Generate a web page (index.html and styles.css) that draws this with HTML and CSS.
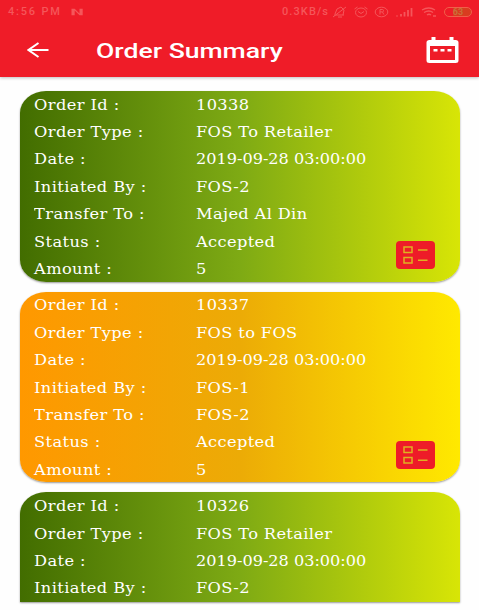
FILE: index.html
```html
<!DOCTYPE html>
<html lang="en">
<head>
    <meta charset="utf-8">
    <meta name="viewport" content="width=device-width, initial-scale=1.0">
    <title>Order Summary</title>
    <link rel="stylesheet" href="styles.css">
</head>
<body>
    <header class="header">
        <div class="status-bar">
            <span class="clock">4:56 PM</span>
            <svg class="nougat" width="15" height="8" viewBox="0 0 17 10"><path d="M1 9V1h4l6 6V1h4v8h-4L5 3v6z" fill="currentColor"/></svg>
            <span class="speed">0.3KB/s</span>
            <svg class="status-icons" width="112" height="14" viewBox="0 0 112 14" fill="none" stroke="currentColor">
                <!-- muted bell -->
                <path d="M2 10h10M3 9l2-5 4-2 3 3-1 5M1 12L14 2M6 12h4"/>
                <!-- alarm -->
                <ellipse cx="29" cy="7.5" rx="5.5" ry="4.5"/><path d="M26 6.5l3 2 3-2M22.500 4l3-2M32.500 2l3 2"/>
                <!-- registered -->
                <ellipse cx="49.500" cy="7" rx="6.300" ry="4.800"/><path d="M48 9.500v-5h2.500q1 0 1 1.200t-1 1.200H48M50.500 7l1.300 2.500"/>
                <!-- signal -->
                <path d="M65 11.500v-1M69 11.500V9M72.500 11.500V7M76 11.500V5M79.500 11.500V3" stroke-width="1.800"/>
                <!-- wifi -->
                <path d="M90 5q7-4 13 0M92 7.500q5-3 9 0M95 10q2-1.500 4 0M101 11h3" stroke-width="1.300"/>
            </svg>
            <span class="battery">63</span>
        </div>
        <div class="toolbar">
            <svg class="back" width="22" height="16" viewBox="0 0 22 16"><path d="M11.500 1L1.500 8l10 7M1.500 8H21.500" fill="none" stroke="#fff" stroke-width="2"/></svg>
            <h1 class="title"><span>Order Summary</span></h1>
            <svg class="calendar" width="33" height="27" viewBox="0 0 33 27">
                <path fill="#fff" fill-rule="evenodd" d="M5.500 0h4v3h14V0h4v3H29.500q3 0 3 2.500v18q0 2.500-3 2.500h-26q-3 0-3-2.500v-18Q.5 3 3.500 3h2zM4 9v14h25V9z"/>
                <path fill="#fff" d="M7.500 12h4v2.500h-4zM14.500 12h4v2.500h-4zM21.500 12h4v2.500h-4z"/>
            </svg>
        </div>
    </header>

    <main class="orders">
        <section class="card green">
            <dl>
                <dt>Order Id :</dt><dd>10338</dd>
                <dt>Order Type :</dt><dd>FOS To Retailer</dd>
                <dt>Date :</dt><dd class="date">2019-09-28 03:00:00</dd>
                <dt>Initiated By :</dt><dd>FOS-2</dd>
                <dt>Transfer To :</dt><dd>Majed Al Din</dd>
                <dt>Status :</dt><dd>Accepted</dd>
                <dt>Amount :</dt><dd>5</dd>
            </dl>
            <svg class="details" width="39" height="28" viewBox="0 0 39 28"><rect width="39" height="28" rx="4" fill="#ee1c28"/><path d="M8 6h8v5.500H8zM8 16.500h8V22H8zM22 9h9.500M22 19.200h9.500" fill="none" stroke="#e0b020" stroke-width="1.500"/></svg>
        </section>

        <section class="card orange">
            <dl>
                <dt>Order Id :</dt><dd>10337</dd>
                <dt>Order Type :</dt><dd>FOS to FOS</dd>
                <dt>Date :</dt><dd class="date">2019-09-28 03:00:00</dd>
                <dt>Initiated By :</dt><dd>FOS-1</dd>
                <dt>Transfer To :</dt><dd>FOS-2</dd>
                <dt>Status :</dt><dd>Accepted</dd>
                <dt>Amount :</dt><dd>5</dd>
            </dl>
            <svg class="details" width="39" height="28" viewBox="0 0 39 28"><rect width="39" height="28" rx="4" fill="#ee1c28"/><path d="M8 6h8v5.500H8zM8 16.500h8V22H8zM22 9h9.500M22 19.200h9.500" fill="none" stroke="#e0b020" stroke-width="1.500"/></svg>
        </section>

        <section class="card green cut">
            <dl>
                <dt>Order Id :</dt><dd>10326</dd>
                <dt>Order Type :</dt><dd>FOS To Retailer</dd>
                <dt>Date :</dt><dd class="date">2019-09-28 03:00:00</dd>
                <dt>Initiated By :</dt><dd>FOS-2</dd>
            </dl>
        </section>
    </main>
</body>
</html>
```

FILE: styles.css
```css
* {
    box-sizing: border-box;
}

body {
    margin: 0;
    height: 610px;
    overflow: hidden;
    background: #fefefe;
    font-family: "DejaVu Serif", serif;
    color: #fff;
}

svg {
    display: block;
    flex-shrink: 0;
}

.header {
    height: 76.500px;
    background: #ef1c28;
    box-shadow: 0 1px 3px rgba(0, 0, 0, 0.25);
}

.status-bar {
    display: flex;
    align-items: center;
    height: 24px;
    padding-left: 8px;
    font: 500 11px/24px Roboto, sans-serif;
    color: #f5565a;
}

.clock {
    width: 62px;
    letter-spacing: 1.800px;
    white-space: nowrap;
}

.speed {
    width: 50px;
    margin-left: 197px;
    letter-spacing: 1.100px;
    white-space: nowrap;
}

.battery {
    width: 28px;
    height: 10px;
    border: 1px solid #f0604a;
    border-radius: 5px;
    font-size: 9px;
    font-weight: 700;
    line-height: 8px;
    text-align: center;
    background: linear-gradient(90deg, transparent 30%, #d93c20 30%);
    color: #c8703a;
}

.toolbar {
    display: flex;
    align-items: center;
    height: 52px;
    padding: 0 20px 0 27px;
}

.title {
    flex: 1;
    margin: 0 0 0 47px;
    font: 500 20px/28px Roboto, sans-serif;
}

/* type is wider than it is tall throughout the screen */
.title span {
    display: inline-block;
    transform: translateY(1px) scaleX(1.328);
    transform-origin: left;
}

.orders {
    padding: 14.500px 19px 0 20px;
}

.card {
    position: relative;
    height: 190.700px;
    margin-bottom: 10px;
    border-radius: 26px / 22px;
    overflow: hidden;
    box-shadow: 0 1px 2px rgba(0, 0, 0, 0.4);
}

.green {
    background: linear-gradient(90deg, #426d00, #7eaa14 50%, #d8e506);
}

.orange {
    background: linear-gradient(90deg, #ff9800, #ecab06 50%, #ffe900);
}

.cut {
    height: 109.500px;
    border-radius: 26px 26px 0 0 / 22px 22px 0 0;
}

.card dl {
    display: grid;
    grid-template-columns: 162px 1fr;
    grid-auto-rows: 27.350px;
    margin: 0;
    padding: 0.800px 0 0 14px;
    font-size: 14px;
    line-height: 27.350px;
}

.card dt,
.card dd {
    justify-self: start;
    margin: 0;
    white-space: nowrap;
    transform: scaleX(1.160);
    transform-origin: left;
    letter-spacing: 0.350px;
}

.card dd {
    letter-spacing: 0.300px;
}

.card .date {
    transform: scaleX(1.150);
    letter-spacing: 0;
}

.details {
    position: absolute;
    right: 25px;
    bottom: 13px;
}
```
